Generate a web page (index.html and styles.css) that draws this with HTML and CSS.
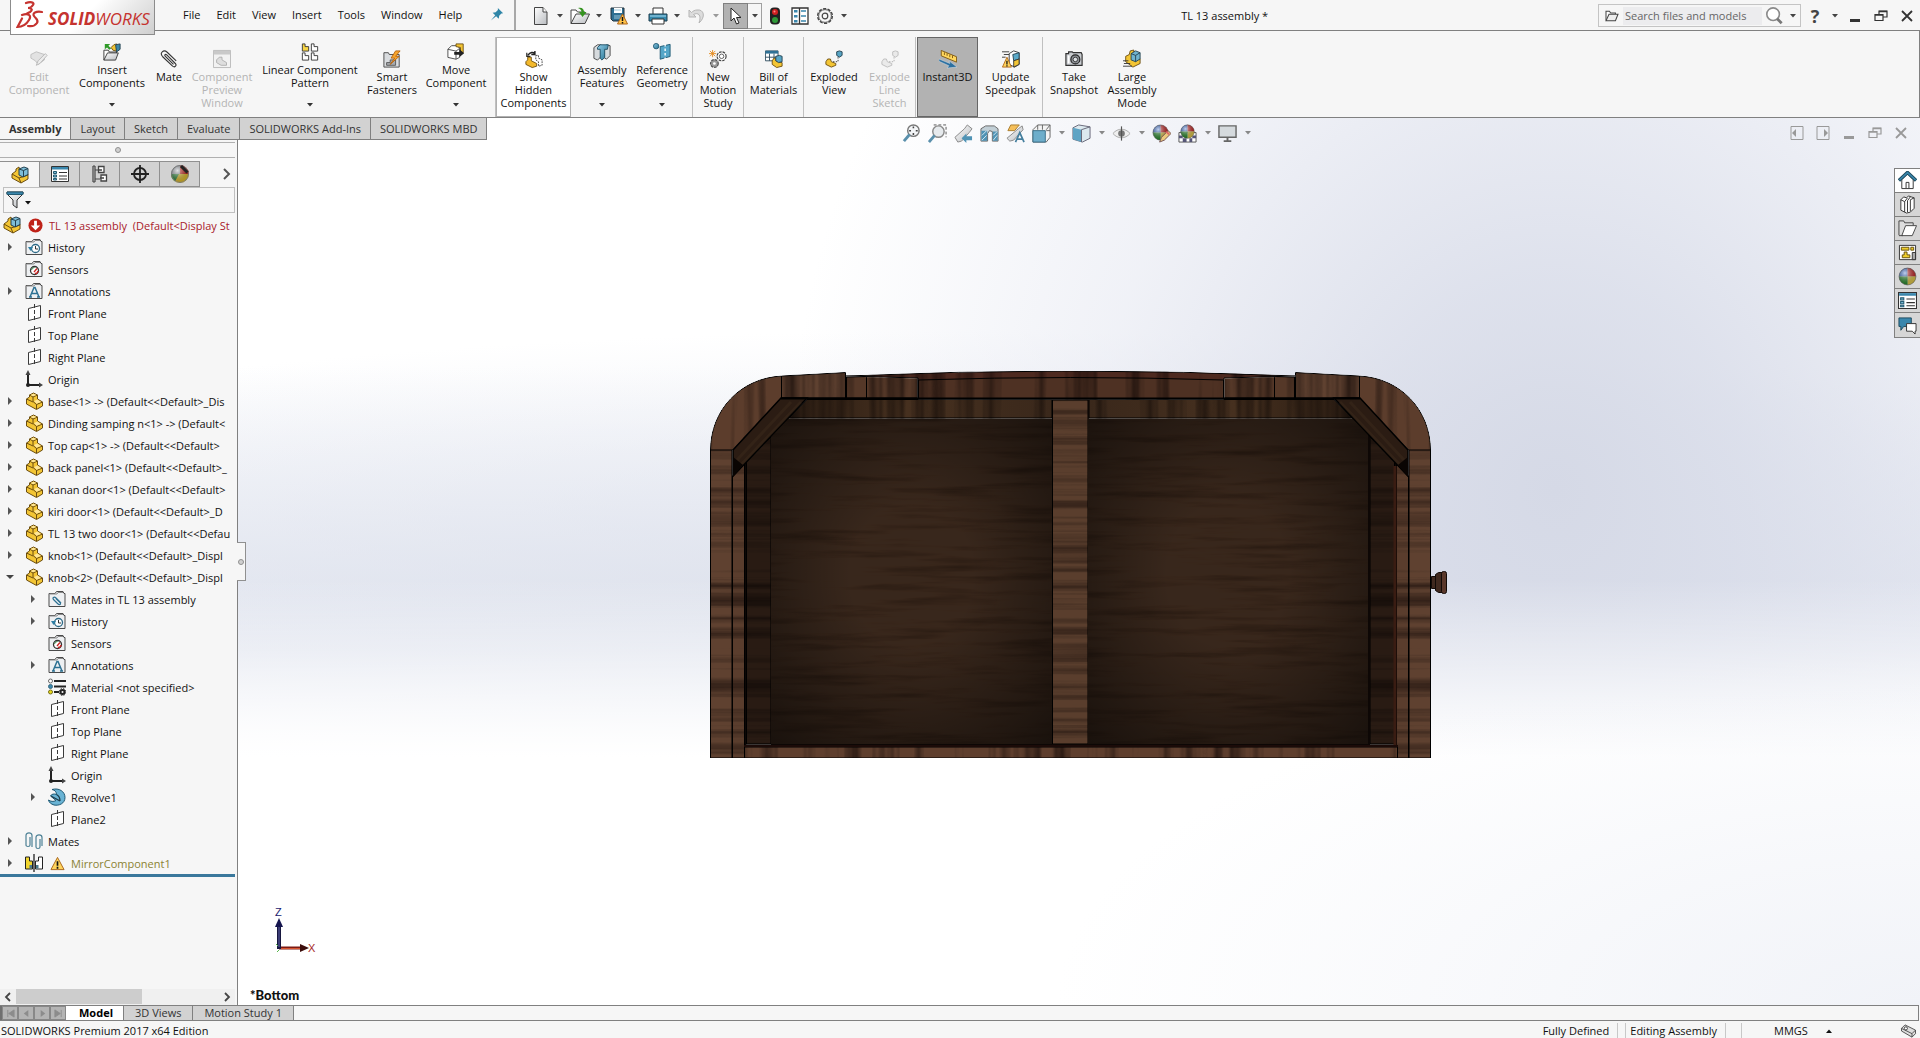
FILE: index.html
```
<!DOCTYPE html>
<html lang="en">
<head>
    <meta charset="UTF-8">
    <meta name="viewport" content="width=device-width, initial-scale=1.0">
    <title>TL 13 assembly *</title>
    <link rel="stylesheet" href="styles.css">
</head>
<body>
    <!-- Icon sprite -->
    <svg class="sprite" aria-hidden="true">
        <defs>
            <linearGradient id="steel" x1="0" y1="0" x2="1" y2="1"><stop offset="0" stop-color="#fff"/><stop offset="1" stop-color="#b9bcc0"/></linearGradient>
            <linearGradient id="sky" x1="0" y1="0" x2="1" y2="1"><stop offset="0" stop-color="#8fcbe6"/><stop offset="1" stop-color="#22708f"/></linearGradient>
            <radialGradient id="shine" cx=".35" cy=".3" r=".7"><stop offset="0" stop-color="#fff" stop-opacity=".7"/><stop offset="1" stop-color="#000" stop-opacity=".25"/></radialGradient>
        </defs>
        <symbol id="i-part" viewBox="0 0 18 18"><path d="M1.500 7l3-2V3l4-2 4 2v4l5 3v4l-6 3.500L1.500 12z" fill="#f3c534" stroke="#6b4d10"/><path d="M4.500 3l3.500 2 4.500-2M8 5v4.500l3.500 3 6-2.500M11.500 12.500V17M1.500 7L8 10" fill="none" stroke="#6b4d10"/><path d="M5.500 3l3-1.300 3 1.300L8 4.300zM9 9l3.500-1.500L16 10l-4.500 1.700z" fill="#ffe79a"/></symbol>
        <symbol id="i-asm" viewBox="0 0 18 18"><path d="M1 8l4-3v-2l3-2 1 8 8-1v5l-7 4L1 12z" fill="#f3c534" stroke="#6b4d10"/><path d="M1 8l7 4 2 5M8 12l9-3" fill="none" stroke="#6b4d10"/><path d="M8 3l5-2 4 1.500v6L12 11l-4-2z" fill="#7dbdd8" stroke="#23404e"/><path d="M8 3l4.500 1.500L17 2.500M12.500 4.500V11" fill="none" stroke="#23404e"/></symbol>
        <symbol id="i-folder" viewBox="0 0 18 18"><path d="M1 16.500V3.500h6l1.500-2H15l1 2h1v13z" fill="#eef0f2" stroke="#4a4a4a"/><path d="M1.500 4H9l1-1.500h5" fill="none" stroke="#8a8a8a"/></symbol>
        <symbol id="i-history" viewBox="0 0 18 18"><use href="#i-folder"/><circle cx="10.500" cy="10.500" r="4" fill="#fff" stroke="#2d6a87" stroke-width="1.300"/><path d="M10.500 8v3h2.500" fill="none" stroke="#333"/><path d="M3 9h5l-2.500 4z" fill="#2d7da3"/></symbol>
        <symbol id="i-sensor" viewBox="0 0 18 18"><use href="#i-folder"/><circle cx="9.500" cy="10.500" r="4" fill="#fff" stroke="#333" stroke-width="1.300"/><path d="M9 12l3-3.500" stroke="#c22" stroke-width="1.300"/><path d="M10 13.500a3 3 0 0 0 3-2.500" stroke="#c22" stroke-width="1.500" fill="none"/><path d="M6.500 10a3 3 0 0 1 3-2.500" stroke="#3a8a4a" fill="none"/></symbol>
        <symbol id="i-annot" viewBox="0 0 18 18"><use href="#i-folder"/><path d="M5 15l4-9.500h1L14 15M6.500 11.500h6M4 15h3M12 15h3" fill="none" stroke="#2d7193" stroke-width="1.500"/></symbol>
        <symbol id="i-matefold" viewBox="0 0 18 18"><use href="#i-folder"/><path d="M13 13l-5-5c-2-2-4 0-2.500 1.500l4 4c2 2 4 1 2.500-1L8 8.500" fill="none" stroke="#2d7193" stroke-width="1.200"/></symbol>
        <symbol id="i-plane" viewBox="0 0 18 18"><path d="M3.500 4.500l12-3v12l-12 3z" fill="#fff" stroke="#3a3a3a"/><path d="M9.500 0v18" stroke="#3a3a3a" stroke-dasharray="4 2"/></symbol>
        <symbol id="i-origin" viewBox="0 0 18 18"><path d="M3 4v11h11" fill="none" stroke="#222" stroke-width="2"/><path d="M3 0L.5 5h5zM18 15l-4-2.500v5z" fill="#444"/><circle cx="3" cy="15" r="2" fill="#222"/></symbol>
        <symbol id="i-material" viewBox="0 0 18 18"><path d="M6 3h12M6 8.500h12M6 14h5" stroke="#222" stroke-width="2"/><circle cx="2.500" cy="3" r="2" fill="#fff" stroke="#666"/><circle cx="2.500" cy="8.500" r="2" fill="#3a87ad" stroke="#3a6a80"/><circle cx="2.500" cy="14" r="2" fill="#e8d91c" stroke="#77701c"/><circle cx="14.500" cy="14" r="2" fill="none" stroke="#222" stroke-width="2"/><circle cx="14.500" cy="14" r="3.400" fill="none" stroke="#222" stroke-dasharray="1.500 1.200"/></symbol>
        <symbol id="i-revolve" viewBox="0 0 18 18"><path d="M4 1.500c7-2 13 2 13 8S11 18 6 17c-3-1-5-2.500-5.500-5 2 1.500 5 2 7.500.5L2.500 8c1-2 3.500-2.500 6-1.500 0-2.500-1.500-4.500-4.500-5z" fill="#69b3d4" stroke="#1d5873"/><path d="M3 8l9 5M8.500 6.500c2 1 3.500 3 3.500 6.500" fill="none" stroke="#1d3c4a" stroke-width="1.300"/></symbol>
        <symbol id="i-clips" viewBox="0 0 18 18"><path d="M5 5v8c0 2-4 2-4 0V3.500c0-3.500 6-3.500 6 0V15M15 7v8c0 2-4 2-4 0V5.500c0-3.500 6-3.500 6 0V14" fill="none" stroke="#4c8095" stroke-width="1.200"/></symbol>
        <symbol id="i-mirror" viewBox="0 0 18 18"><path d="M.5 3h4v4h3v8h-7z" fill="#f1d52e" stroke="#222"/><path d="M17.500 3h-4v4h-3v8h7z" fill="#fff" stroke="#222"/><path d="M9 0v18" stroke="#111" stroke-width="1.200"/><path d="M4.500 11h2.500v3.500H4.500zM11 11h2.500v3.500H11z" fill="#49788c"/></symbol>
        <symbol id="i-warn" viewBox="0 0 16 16"><path d="M8 1.500l7 13H1z" fill="#ffd45c" stroke="#a8641a" stroke-linejoin="round"/><path d="M8 5.500v5M8 11.500v2" stroke="#111" stroke-width="1.800"/></symbol>
        <symbol id="i-error" viewBox="0 0 16 16"><circle cx="8" cy="8" r="7.500" fill="#bf2218"/><path d="M6.500 3h3v5H13l-5 5-5-5h3.500z" fill="#fff"/></symbol>
        <symbol id="i-props" viewBox="0 0 18 18"><path d="M.5 1.500h17v15H.5z" fill="#fff" stroke="#333"/><path d="M1 2h16v2.500H1z" fill="#3a87ad"/><path d="M2.500 6.500h3v2h-3zM2.500 10h3v2h-3zM2.500 13.500h3v1.500h-3z" fill="#7bbbd6" stroke="#235b73"/><path d="M8 7.500h8M8 11h8M8 14h8" stroke="#333"/></symbol>
        <symbol id="i-config" viewBox="0 0 18 18"><path d="M2 1h2M2 17h2M4 1v16M4 5h5M4 14h5M2 1v16" fill="none" stroke="#444" stroke-width="1.200"/><path d="M7.500 7.500v-6H13v6zM10 16v-6h5.500v6z" fill="#fff" stroke="#444" stroke-width="1.300"/><path d="M7 5h4M9 13h4" stroke="#444" stroke-width="1.300"/></symbol>
        <symbol id="i-target" viewBox="0 0 18 18"><circle cx="9" cy="9" r="6" fill="none" stroke="#222" stroke-width="1.800"/><path d="M9 0v18M0 9h18" stroke="#222" stroke-width="1.800"/></symbol>
        <symbol id="i-ball" viewBox="0 0 18 18"><path d="M9 9V1a8 8 0 0 0-8 8z" fill="#2a61c8"/><path d="M9 9V1a8 8 0 0 1 8 8z" fill="#cf2323"/><path d="M9 9h8a8 8 0 0 1-8 8z" fill="#ecd24a"/><path d="M9 9v8a8 8 0 0 1-8-8z" fill="#28922c"/><circle cx="9" cy="9" r="8" fill="url(#shine)" stroke="#555" stroke-width=".6"/></symbol>
        <symbol id="i-dispball" viewBox="0 0 18 18"><path d="M9 9V0a9 9 0 0 0-9 9z" fill="#9aa0a8"/><path d="M9 9V0a9 9 0 0 1 9 9z" fill="#d1231c"/><path d="M0 9h18a9 9 0 0 1-9 9 9 9 0 0 1-9-9z" fill="#ecc62c"/><path d="M0 9h8l-4 7.500A9 9 0 0 1 0 9z" fill="#2c8c3c"/><circle cx="9" cy="9" r="8.500" fill="url(#shine)" stroke="#777"/><path d="M10 1l6.500 6.500" stroke="#222" stroke-width="3"/></symbol>
        <symbol id="i-filter" viewBox="0 0 18 18"><path d="M1 1h16v2l-6 6v8l-4-3V9L1 3z" fill="url(#steel)" stroke="#333"/><path d="M1 1h16v2.500H1z" fill="#3a87ad" stroke="#245b73"/></symbol>

        <symbol id="i-pin" viewBox="0 0 16 16"><path d="M9 1l6 6-2 .5-2.500 2.500-.5 3.500-3-3-6 5 5-6-3-3L6.500 6 9 3.500z" fill="#2f86a8"/></symbol>
        <symbol id="i-new" viewBox="0 0 18 18"><path d="M2.500.5h8.500l4 4.500v12.500H2.500z" fill="url(#steel)" stroke="#444"/><path d="M11 .5V5h4" fill="#fff" stroke="#444"/></symbol>
        <symbol id="i-open" viewBox="0 0 20 18"><path d="M1 16.500V3h5l1.500 2H15v3" fill="#fff" stroke="#444"/><path d="M1 16.500L6 7h13.500L15 16.500z" fill="url(#steel)" stroke="#444"/><path d="M8 1c4-1 6 1 6 4h2.500L12.500 10 9 5h2.500c0-2-1-3-3.500-4z" fill="#35941f"/></symbol>
        <symbol id="i-save" viewBox="0 0 18 18"><path d="M1 1h13v13H3l-2-2z" fill="#2f6f92" stroke="#20313b"/><path d="M4 1h8v5H4z" fill="#fff"/><path d="M4 3h7M4 9h7M4 11h7" stroke="#9ac6da"/><path d="M12.500 7l5 10h-10z" fill="#ffc247" stroke="#b0671a"/><path d="M12.500 10v4M12.500 15v1.500" stroke="#111" stroke-width="1.500"/></symbol>
        <symbol id="i-print" viewBox="0 0 20 18"><path d="M5 7V1h10v6" fill="#fff" stroke="#333"/><path d="M1 7h18v7H1z" fill="#3689ad" stroke="#1d3d4c"/><path d="M2 9h16" stroke="#a8dbf0"/><path d="M4 12h12v5H4z" fill="#fff" stroke="#333"/></symbol>
        <symbol id="i-undo" viewBox="0 0 18 18"><path d="M1 3v7h7L5.500 7.500C10 5 14 8 11 16c7-6 5-14-2-13-2 0-4 1-5.500 2.500z" fill="#dcdcdc" stroke="#b5b5b5"/></symbol>
        <symbol id="i-cursor" viewBox="0 0 18 18"><path d="M4 1v13l3-3 2.500 6 2.500-1-2.500-5.500H14z" fill="#fff" stroke="#222"/></symbol>
        <symbol id="i-traffic" viewBox="0 0 12 18"><rect x="1" y=".5" width="10" height="17" rx="4" fill="#222"/><circle cx="6" cy="5" r="3" fill="#cf2020"/><circle cx="6" cy="13" r="3" fill="#2f9a38"/><circle cx="5.500" cy="4.500" r="1" fill="#ff8b8b"/></symbol>
        <symbol id="i-list" viewBox="0 0 18 18"><path d="M1 1h16v16H1zM8.500 1v16" fill="#fff" stroke="#333" stroke-width="1.300"/><path d="M3 3h3.500v2.500H3zM3 8h3.500v2.500H3zM3 13h3.500v2.500H3z" fill="#3a87ad"/><path d="M10 4h5M10 9h5M10 14h5" stroke="#3a87ad" stroke-width="1.500"/></symbol>
        <symbol id="i-gear" viewBox="0 0 18 18"><circle cx="9" cy="9" r="7.300" fill="#f6f6f6" stroke="#444" stroke-width="1.500" stroke-dasharray="3.200 1.400"/><circle cx="9" cy="9" r="6.400" fill="#f6f6f6" stroke="#555"/><circle cx="9" cy="9" r="2.800" fill="none" stroke="#444" stroke-width="1.200"/></symbol>
        <symbol id="i-caret" viewBox="0 0 6 4"><path d="M0 0h6L3 3.500z" fill="currentColor"/></symbol>
        <symbol id="i-search" viewBox="0 0 20 20"><circle cx="9" cy="8" r="7" fill="#fff" stroke="#8a8a8a" stroke-width="1.800"/><path d="M13.500 13l5 5" stroke="#777" stroke-width="3"/></symbol>
        <symbol id="i-sfolder" viewBox="0 0 16 14"><path d="M1 12V1.500h4l1.500 2H12V5" fill="#fff" stroke="#444" stroke-width="1.200"/><path d="M1 12.500L4.500 5H15l-3 7.500z" fill="#eee" stroke="#444" stroke-width="1.200"/></symbol>
        <symbol id="i-min" viewBox="0 0 14 14"><path d="M2 11.500h10" stroke="currentColor" stroke-width="3"/></symbol>
        <symbol id="i-restore" viewBox="0 0 14 14"><path d="M1 5.500h8v6H1zM5 5V2h8v6h-4" fill="none" stroke="currentColor" stroke-width="1.200"/><path d="M1 6h8M5 2.500h8" stroke="currentColor" stroke-width="1.500"/></symbol>
        <symbol id="i-close" viewBox="0 0 14 14"><path d="M2 2l10 10M12 2L2 12" stroke="currentColor" stroke-width="1.800"/></symbol>
        <symbol id="i-pleft" viewBox="0 0 14 14"><path d="M1 .5h12v13H1z" fill="none" stroke="currentColor"/><path d="M6 3v8L2 7z" fill="currentColor"/></symbol>
        <symbol id="i-pright" viewBox="0 0 14 14"><path d="M1 .5h12v13H1z" fill="none" stroke="currentColor"/><path d="M8 3v8l4-4z" fill="currentColor"/></symbol>

        <symbol id="i-edit" viewBox="0 0 20 20"><path d="M1 5l6-3 9 3v6l-7 5-3-4-5-3z" fill="#e2e2e2" stroke="#bdbdbd"/><path d="M7 17l2-5 8-8 2 2-8 9z" fill="#ececec" stroke="#b5b5b5"/></symbol>
        <symbol id="i-insert" viewBox="0 0 20 20"><path d="M1 19V8h5l1 2h8v2" fill="#fff" stroke="#333"/><path d="M1 19l4-8h12l-3 8z" fill="url(#steel)" stroke="#333"/><path d="M2 1h6L6 3l3 3-2 1.500L4.500 5 2 7z" fill="#2f9a28"/><path d="M9 5l3-3 3-1v8l-4-1z" fill="#f3c534" stroke="#6b4d10"/><path d="M14 2l5-1v6l-4 3z" fill="#3d87a8" stroke="#23404e"/></symbol>
        <symbol id="i-mate" viewBox="0 0 20 20"><path d="M15 16L6 7C4.500 5.500 6 4 7.500 5.500L17 15c2 2-.5 5-3 3L3 7.500C-1 3 4-1 8 2.500L18 12" fill="none" stroke="#333" stroke-width="1.200"/></symbol>
        <symbol id="i-preview" viewBox="0 0 20 20"><path d="M.5.5h19v19H.5z" fill="#f2f2f2" stroke="#b5b5b5"/><path d="M1 1h18v4H1z" fill="#c9c9c9"/><path d="M4 11l3-3h3v3l5 3v3H9l-5-3z" fill="#dedede" stroke="#adadad"/></symbol>
        <symbol id="i-pattern" viewBox="0 0 20 20"><path d="M1.500 1h3v3h4v5h-7z" fill="#f6d445" stroke="#333"/><path d="M11.500 1h3v3h4v5h-7zM1.500 11h3v3h4v5h-7zM11.500 11h3v3h4v5h-7z" fill="#fff" stroke="#333"/></symbol>
        <symbol id="i-smart" viewBox="0 0 20 20"><path d="M1 19V3h5l1 2h11v14z" fill="#d9dcdf" stroke="#444"/><path d="M4 14h4v-3h6v6H4z" fill="#a8abb0" stroke="#555"/><path d="M19 1h-5L9 9h4l-5 7 10-9h-4z" fill="#f9a52b" stroke="#b3610c"/></symbol>
        <symbol id="i-move" viewBox="0 0 20 20"><path d="M1 7l4-4h7l2 3v10l-4 2-9-2z" fill="#fff" stroke="#444"/><path d="M1 7l9 2 4-3M10 9v9" fill="none" stroke="#444"/><path d="M10 1h8v10h-3V5l-5-1z" fill="#f3c534" stroke="#6b4d10"/><path d="M8 10h6V7l5 4.500-5 4V13H8z" fill="#222"/></symbol>
        <symbol id="i-hidden" viewBox="0 0 20 20"><path d="M3 6c3-4 6-4 8-2M11 1v4H7" fill="none" stroke="#222" stroke-width="1.600"/><path d="M2 3v4h4" fill="none" stroke="#222" stroke-width="1.300"/><path d="M1 13l2-2V8h4v4l6 3v3l-5 1.500L1 16z" fill="#f3b92c" stroke="#6b4d10"/><path d="M12 6h3v3l4 2v6l-4 1v-5l-3-2z" fill="#fff" stroke="#444" stroke-dasharray="2 1"/></symbol>
        <symbol id="i-feat" viewBox="0 0 20 20"><path d="M1 5l4-3h4v13l-4 4-4-2zM12 5l3-3 4 1v11l-4 4-3-2z" fill="#d6dadd" stroke="#444"/><path d="M5 5l3-3h9l-1 5h-3v9l-3 3-2-2V7H5z" fill="url(#sky)" stroke="#1d4d63"/></symbol>
        <symbol id="i-refgeo" viewBox="0 0 20 20"><circle cx="3.500" cy="3.500" r="3" fill="url(#sky)" stroke="#1d5873"/><path d="M8 4l11-2.500V15L8 18z" fill="#55a6c8" stroke="#1d5873"/><path d="M13.500 1v18" stroke="#fff" stroke-dasharray="3 2" stroke-width="1.500"/></symbol>
        <symbol id="i-motion" viewBox="0 0 20 20"><circle cx="14" cy="7" r="5" fill="#fff" stroke="#444" stroke-width="1.300" stroke-dasharray="3 1"/><circle cx="14" cy="7" r="2.500" fill="#fff" stroke="#555"/><circle cx="6" cy="15" r="4.300" fill="#9a9a9a" stroke="#555" stroke-width="1.300" stroke-dasharray="3 1"/><circle cx="6" cy="15" r="1.500" fill="#fff"/><path d="M4 0v8M0 4h8M1 1l6 6M7 1L1 7" stroke="#e48a1e"/></symbol>
        <symbol id="i-bom" viewBox="0 0 20 20"><path d="M.5 1h14v11H.5z" fill="#fff" stroke="#2b4a5c"/><path d="M.5 1h14v3H.5z" fill="#2f7196"/><path d="M.5 8h14M5 4v8M10 4v8" stroke="#2b4a5c"/><path d="M8 12l2-3h2v3l7 2v4l-6 1.500L8 16z" fill="#f3c534" stroke="#6b4d10"/><path d="M12 7l4-1 3 1v6l-4 1-3-2z" fill="#57a4c4" stroke="#23404e"/></symbol>
        <symbol id="i-explode" viewBox="0 0 20 20"><path d="M1 13l2-3h3l1 3 5 2v2l-5 2-6-3z" fill="#f3c534" stroke="#6b4d10"/><path d="M13 2l3-1 3 1v4l-3 2-3-2z" fill="#57a4c4" stroke="#23404e"/><path d="M9 13h5.500V7" fill="none" stroke="#333" stroke-dasharray="1.500 1.500"/></symbol>
        <symbol id="i-explodeline" viewBox="0 0 20 20"><path d="M1 13l2-3h3l1 3 5 2v2l-5 2-6-3z" fill="#eaeaea" stroke="#bcbcbc"/><path d="M13 2l3-1 3 1v4l-3 2-3-2z" fill="#eaeaea" stroke="#bcbcbc"/><path d="M9 13h5.500V7" fill="none" stroke="#aaa" stroke-dasharray="1.500 1.500"/></symbol>
        <symbol id="i-instant" viewBox="0 0 20 20"><path d="M2.500.5l17 7v6l-17-7z" fill="#ffd75e" stroke="#7a5510"/><path d="M6 2.500v3M9 3.500v3M12 5v3M15 6v3" stroke="#7a5510"/><path d="M0 10l12 5-1-3 9 7-11 1 2-2.500-11-5z" fill="#2c6fa0" stroke="#dbe8f0" stroke-width=".5"/></symbol>
        <symbol id="i-speedpak" viewBox="0 0 20 20"><path d="M0 2h8M2 5h6M0 8h4" stroke="#333"/><path d="M8 4l5-3 6 2v13l-5 3-6-3z" fill="#fff" stroke="#333"/><path d="M12 5l7-2v7l-6 2z" fill="#5ba9c8" stroke="#23404e"/><path d="M13 12l6-2v6l-6 3z" fill="#f3c534" stroke="#333"/><path d="M5.500 8l5 11H.5z" fill="#ffd45c" stroke="#b0671a"/><path d="M5.500 12v4M5.500 17v1.200" stroke="#111" stroke-width="1.400"/></symbol>
        <symbol id="i-camera" viewBox="0 0 20 20"><path d="M1 4h3V2h4l1 1h9l1 2v12H1z" fill="#c9ccd0" stroke="#333" stroke-width="1.300"/><circle cx="11.500" cy="10.500" r="5" fill="#8b8f94" stroke="#222" stroke-width="1.300"/><circle cx="11.500" cy="10.500" r="2.500" fill="#dfe3e6" stroke="#333"/><path d="M4 6v9" stroke="#fff" stroke-width="2"/></symbol>
        <symbol id="i-large" viewBox="0 0 20 20"><path d="M3 7l4-2 1-4 4-1v9l7 1v5l-8 4-8-6z" fill="#f3c534" stroke="#6b4d10"/><path d="M9 4l5-3 5 2v7l-5 3-5-2z" fill="#6fb3cf" stroke="#23404e"/><path d="M9 4l5 2 5-3M14 6v7" fill="none" stroke="#23404e"/><path d="M0 12h6M1 15h7M0 18h10" stroke="#333"/></symbol>

        <symbol id="i-zoomfit" viewBox="0 0 20 20"><circle cx="12" cy="7" r="6" fill="#f3f5f7" stroke="#777" stroke-width="1.500"/><path d="M12 2.500v9M7.500 7h9" stroke="#444" stroke-width="1.600" stroke-dasharray="2 5"/><path d="M8 11l-6 7" stroke="#5a90ac" stroke-width="3"/></symbol>
        <symbol id="i-zoomarea" viewBox="0 0 20 20"><path d="M6 1h13v13" fill="none" stroke="#555" stroke-dasharray="3 2"/><circle cx="11" cy="8" r="6" fill="#e6eaed" stroke="#888" stroke-width="1.500"/><path d="M7 12l-6 7" stroke="#5a90ac" stroke-width="3"/></symbol>
        <symbol id="i-prevview" viewBox="0 0 20 20"><path d="M1 14l10-9 3-4 5 4-3 4-8 9-4 1z" fill="url(#steel)" stroke="#888"/><path d="M19 13h-6v-3l-5 5 5 5v-3h6z" fill="#4f93b5"/></symbol>
        <symbol id="i-section" viewBox="0 0 20 20"><path d="M1 5l5-3h9l4 3v13h-6V8l-3-1-2 3v8H1z" fill="#c2cfd6" stroke="#666"/><path d="M1.500 7H7.500v10.500h-6zM13.500 8h5v9.500h-5z" fill="#4f93b5"/><path d="M2 12l5-5M2 17l5-5M14 12l4-4M14 17l4-5" stroke="#d5e9f2"/></symbol>
        <symbol id="i-dynview" viewBox="0 0 20 20"><path d="M5 1h9L9 7H2z" fill="#f5bf5a" stroke="#a97c2c"/><path d="M1 15L13 5l4-3 1 4-10 11-4 1z" fill="url(#steel)" stroke="#888"/><path d="M10 19l4.500-10L19 19M12 16h5.500" fill="none" stroke="#457f9e" stroke-width="1.800"/></symbol>
        <symbol id="i-orient" viewBox="0 0 20 20"><path d="M1 6l5-5h13v13l-4 5H1z" fill="#f4f4f4" stroke="#666"/><path d="M6 1v5M19 7h-4M19 1l-4 5M11 1v5" stroke="#666" fill="none"/><path d="M1 7h13v12H1z" fill="#6eaecb" stroke="#3a6f88"/></symbol>
        <symbol id="i-display" viewBox="0 0 20 20"><path d="M1 4l6-3 12 2v12l-8 4-10-3z" fill="#dce9ef" stroke="#667"/><path d="M1 4l9 2v13l-9-3z" fill="#5fa4c4"/><path d="M10 6l9-3M10 6v13" stroke="#667"/></symbol>
        <symbol id="i-eye" viewBox="0 0 20 20"><path d="M1 10c5-6 13-6 18 0-5 6-13 6-18 0z" fill="#efefef" stroke="#aaa"/><circle cx="10" cy="10" r="3.500" fill="#777"/><path d="M10 2.500v15" stroke="#555" stroke-width="1.200"/></symbol>
        <symbol id="i-appear" viewBox="0 0 20 20"><use href="#i-ball" width="18" height="18"/><path d="M8 19l2-5 7-7 3 3-7 7z" fill="#ecc97c" stroke="#755"/><path d="M15 8l3 3" stroke="#d66" stroke-width="2"/></symbol>
        <symbol id="i-scene" viewBox="0 0 20 20"><path d="M1 9h18v10H1z" fill="#fff" stroke="#555"/><path d="M1 12h4v3H1zM15 12h4v3h-4zM5 15h4v4H5zM12 15h3v4h-3z" fill="#557"/><use href="#i-ball" x="2" width="16" height="16"/></symbol>
        <symbol id="i-monitor" viewBox="0 0 20 20"><path d="M1 2h18v12H1z" fill="#d5dade" stroke="#666" stroke-width="1.500"/><path d="M10 14v4M6 18h8" stroke="#666" stroke-width="2"/></symbol>

        <symbol id="i-home" viewBox="0 0 20 20"><path d="M4 9v9.500h12V9l-6-6z" fill="#fff" stroke="#333"/><path d="M8.500 18v-6h3v6" fill="none" stroke="#333"/><path d="M1 10l9-8.500 9 8.500" fill="none" stroke="#1c4a5e" stroke-width="3.500"/><path d="M1.500 9.500L10 1.800l8.500 7.700" fill="none" stroke="#3a87ad" stroke-width="1.700"/></symbol>
        <symbol id="i-books" viewBox="0 0 20 20"><path d="M3 5l3-3 3 1 2-2 3 1 3 1v11l-4 4-4 1-6-3z" fill="#fff" stroke="#333"/><path d="M3 5l4 2v11M7 7l3-4M10 6v12M10 6l3-4M13 5v12M13 5l4-2" fill="none" stroke="#333"/></symbol>
        <symbol id="i-bigfolder" viewBox="0 0 20 20"><path d="M1 17V2h5l1 2h9v3" fill="#ddd" stroke="#444"/><path d="M4 17.500L8 7h11.500L15 17.500z" fill="#fff" stroke="#444"/><path d="M1 17.500h4" stroke="#444"/></symbol>
        <symbol id="i-palette" viewBox="0 0 20 20"><path d="M1.500 2.500h17v15h-17z" fill="#fff" stroke="#333"/><path d="M3.500 4.500h8v3h-8zM13.500 4.500h3v3h-3zM6.500 9.500h3v3h3v3h-8v-3h2z" fill="#f0cf2e" stroke="#66500d"/><path d="M15 10h3.500v7.500H15z" fill="#aaa" stroke="#333"/></symbol>
        <symbol id="i-forum" viewBox="0 0 20 20"><path d="M1 2h13v9H6l-3 4v-4H1z" fill="#3a87ad" stroke="#1c4a5e"/><path d="M9 8h10v8h-1v3l-3-3H9z" fill="#fff" stroke="#333"/></symbol>
        <symbol id="i-tag" viewBox="0 0 18 16"><path d="M1 5l4-4 12 6v4l-4 4L1 8z" fill="#ddd" stroke="#444"/><path d="M1 5l12 6 4-4M13 11v4" fill="none" stroke="#444"/><circle cx="6" cy="5" r="1.800" fill="#fff" stroke="#333"/></symbol>
    </svg>

    <div class="app">
        <header class="titlebar">
            <a class="logo" href="#" aria-label="SOLIDWORKS">
                <svg class="logo-mark" viewBox="0 0 28 28" aria-hidden="true"><g fill="none" stroke="#c5332f" stroke-width="2.200" stroke-linecap="round"><path d="M10 2c4-1.500 9-1 7 2s-5 3-5 3c4 0 5 2 2 4l-3 1.500"/><path d="M6 14c6-2 10 0 7 5S5 26 1.500 26L6 17.500"/><path d="M26 11c-6-1-10 1-8 4s5 4 3 7-6 3.500-9 3"/></g></svg>
                <span><b>SOLID</b>WORKS</span>
            </a>
            <nav class="menu">
                <a href="#">File</a>
                <a href="#">Edit</a>
                <a href="#">View</a>
                <a href="#">Insert</a>
                <a href="#">Tools</a>
                <a href="#">Window</a>
                <a href="#">Help</a>
            </nav>
            <button class="pin" aria-label="Pin menu"><svg><use href="#i-pin"/></svg></button>
            <div class="quick">
                <button aria-label="New"><svg><use href="#i-new"/></svg></button>
                <button class="drop" aria-label="New options"><svg><use href="#i-caret"/></svg></button>
                <button aria-label="Open"><svg><use href="#i-open"/></svg></button>
                <button class="drop" aria-label="Open options"><svg><use href="#i-caret"/></svg></button>
                <button aria-label="Save"><svg><use href="#i-save"/></svg></button>
                <button class="drop" aria-label="Save options"><svg><use href="#i-caret"/></svg></button>
                <button aria-label="Print"><svg><use href="#i-print"/></svg></button>
                <button class="drop" aria-label="Print options"><svg><use href="#i-caret"/></svg></button>
                <button aria-label="Undo" disabled><svg><use href="#i-undo"/></svg></button>
                <button class="drop" aria-label="Undo options" disabled><svg><use href="#i-caret"/></svg></button>
                <button class="pressed" aria-label="Select"><svg><use href="#i-cursor"/></svg></button>
                <button class="drop framed" aria-label="Select options"><svg><use href="#i-caret"/></svg></button>
                <button aria-label="Rebuild"><svg><use href="#i-traffic"/></svg></button>
                <button aria-label="File properties"><svg><use href="#i-list"/></svg></button>
                <button aria-label="Options"><svg><use href="#i-gear"/></svg></button>
                <button class="drop" aria-label="More options"><svg><use href="#i-caret"/></svg></button>
            </div>
            <div class="doc-title">TL 13 assembly *</div>
            <form class="search">
                <svg class="search-folder"><use href="#i-sfolder"/></svg>
                <input type="text" aria-label="Search files and models" placeholder="Search files and models">
                <button type="button" aria-label="Search"><svg><use href="#i-search"/></svg></button>
                <button type="button" class="drop" aria-label="Search options"><svg><use href="#i-caret"/></svg></button>
            </form>
            <div class="window-buttons">
                <button class="help" aria-label="Help">?</button>
                <button class="drop" aria-label="Help options"><svg><use href="#i-caret"/></svg></button>
                <button aria-label="Minimize"><svg><use href="#i-min"/></svg></button>
                <button aria-label="Restore"><svg><use href="#i-restore"/></svg></button>
                <button aria-label="Close"><svg><use href="#i-close"/></svg></button>
            </div>
        </header>

        <div class="ribbon">
            <button disabled><svg><use href="#i-edit"/></svg>Edit<br>Component</button>
            <button class="has-menu"><svg><use href="#i-insert"/></svg>Insert<br>Components<svg class="caret"><use href="#i-caret"/></svg></button>
            <button><svg><use href="#i-mate"/></svg>Mate</button>
            <button disabled><svg><use href="#i-preview"/></svg>Component<br>Preview<br>Window</button>
            <button class="has-menu"><svg><use href="#i-pattern"/></svg>Linear Component<br>Pattern<svg class="caret"><use href="#i-caret"/></svg></button>
            <button><svg><use href="#i-smart"/></svg>Smart<br>Fasteners</button>
            <button class="has-menu last"><svg><use href="#i-move"/></svg>Move<br>Component<svg class="caret"><use href="#i-caret"/></svg></button>
            <button class="hot last"><svg><use href="#i-hidden"/></svg>Show<br>Hidden<br>Components</button>
            <button class="has-menu"><svg><use href="#i-feat"/></svg>Assembly<br>Features<svg class="caret"><use href="#i-caret"/></svg></button>
            <button class="has-menu last"><svg><use href="#i-refgeo"/></svg>Reference<br>Geometry<svg class="caret"><use href="#i-caret"/></svg></button>
            <button class="last"><svg><use href="#i-motion"/></svg>New<br>Motion<br>Study</button>
            <button class="last"><svg><use href="#i-bom"/></svg>Bill of<br>Materials</button>
            <button><svg><use href="#i-explode"/></svg>Exploded<br>View</button>
            <button class="last" disabled><svg><use href="#i-explodeline"/></svg>Explode<br>Line<br>Sketch</button>
            <button class="on last"><svg><use href="#i-instant"/></svg>Instant3D</button>
            <button class="last"><svg><use href="#i-speedpak"/></svg>Update<br>Speedpak</button>
            <button><svg><use href="#i-camera"/></svg>Take<br>Snapshot</button>
            <button><svg><use href="#i-large"/></svg>Large<br>Assembly<br>Mode</button>
        </div>

        <div class="work">
            <div class="command-tabs">
                <button class="active">Assembly</button>
                <button>Layout</button>
                <button>Sketch</button>
                <button>Evaluate</button>
                <button>SOLIDWORKS Add-Ins</button>
                <button>SOLIDWORKS MBD</button>
            </div>

            <div class="panes">
                <aside class="sidebar">
                    <div class="grip"></div>
                    <div class="panel-tabs">
                        <button class="active" aria-label="FeatureManager"><svg><use href="#i-asm"/></svg></button>
                        <button aria-label="PropertyManager"><svg><use href="#i-props"/></svg></button>
                        <button aria-label="ConfigurationManager"><svg><use href="#i-config"/></svg></button>
                        <button aria-label="DimXpertManager"><svg><use href="#i-target"/></svg></button>
                        <button aria-label="DisplayManager"><svg><use href="#i-dispball"/></svg></button>
                        <button class="more" aria-label="More tabs"><svg viewBox="0 0 8 12"><path d="M1 1l5 5-5 5" fill="none" stroke="#555" stroke-width="2"/></svg></button>
                    </div>
                    <button class="filter" aria-label="Filter"><svg><use href="#i-filter"/></svg><svg class="caret"><use href="#i-caret"/></svg></button>
                    <ul class="tree">
                        <li class="root"><svg><use href="#i-asm"/></svg><svg class="badge"><use href="#i-error"/></svg>TL 13 assembly &nbsp;(Default&lt;Display St</li>
                        <li class="closed"><svg><use href="#i-history"/></svg>History</li>
                        <li><svg><use href="#i-sensor"/></svg>Sensors</li>
                        <li class="closed"><svg><use href="#i-annot"/></svg>Annotations</li>
                        <li><svg><use href="#i-plane"/></svg>Front Plane</li>
                        <li><svg><use href="#i-plane"/></svg>Top Plane</li>
                        <li><svg><use href="#i-plane"/></svg>Right Plane</li>
                        <li><svg><use href="#i-origin"/></svg>Origin</li>
                        <li class="closed"><svg><use href="#i-part"/></svg>base&lt;1&gt; -&gt; (Default&lt;&lt;Default&gt;_Dis</li>
                        <li class="closed"><svg><use href="#i-part"/></svg>Dinding samping n&lt;1&gt; -&gt; (Default&lt;</li>
                        <li class="closed"><svg><use href="#i-part"/></svg>Top cap&lt;1&gt; -&gt; (Default&lt;&lt;Default&gt;</li>
                        <li class="closed"><svg><use href="#i-part"/></svg>back panel&lt;1&gt; (Default&lt;&lt;Default&gt;_</li>
                        <li class="closed"><svg><use href="#i-part"/></svg>kanan door&lt;1&gt; (Default&lt;&lt;Default&gt;</li>
                        <li class="closed"><svg><use href="#i-part"/></svg>kiri door&lt;1&gt; (Default&lt;&lt;Default&gt;_D</li>
                        <li class="closed"><svg><use href="#i-part"/></svg>TL 13 two door&lt;1&gt; (Default&lt;&lt;Defau</li>
                        <li class="closed"><svg><use href="#i-part"/></svg>knob&lt;1&gt; (Default&lt;&lt;Default&gt;_Displ</li>
                        <li class="open"><svg><use href="#i-part"/></svg>knob&lt;2&gt; (Default&lt;&lt;Default&gt;_Displ</li>
                        <li class="sub closed"><svg><use href="#i-matefold"/></svg>Mates in TL 13 assembly</li>
                        <li class="sub closed"><svg><use href="#i-history"/></svg>History</li>
                        <li class="sub"><svg><use href="#i-sensor"/></svg>Sensors</li>
                        <li class="sub closed"><svg><use href="#i-annot"/></svg>Annotations</li>
                        <li class="sub"><svg><use href="#i-material"/></svg>Material &lt;not specified&gt;</li>
                        <li class="sub"><svg><use href="#i-plane"/></svg>Front Plane</li>
                        <li class="sub"><svg><use href="#i-plane"/></svg>Top Plane</li>
                        <li class="sub"><svg><use href="#i-plane"/></svg>Right Plane</li>
                        <li class="sub"><svg><use href="#i-origin"/></svg>Origin</li>
                        <li class="sub closed"><svg><use href="#i-revolve"/></svg>Revolve1</li>
                        <li class="sub"><svg><use href="#i-plane"/></svg>Plane2</li>
                        <li class="closed"><svg><use href="#i-clips"/></svg>Mates</li>
                        <li class="closed warning"><svg><use href="#i-mirror"/></svg><svg class="badge"><use href="#i-warn"/></svg>MirrorComponent1</li>
                    </ul>
                    <div class="hscroll">
                        <button aria-label="Scroll left"><svg viewBox="0 0 8 10"><path d="M6 1L2 5l4 4" fill="none" stroke="#444" stroke-width="1.800"/></svg></button>
                        <div class="track"><div class="thumb"></div></div>
                        <button aria-label="Scroll right"><svg viewBox="0 0 8 10"><path d="M2 1l4 4-4 4" fill="none" stroke="#444" stroke-width="1.800"/></svg></button>
                    </div>
                    <button class="splitter" aria-label="Collapse panel"></button>
                </aside>

                <main class="viewport">
                    <svg class="model" viewBox="709 370 738 406" role="img" aria-label="Cabinet, bottom view">
                        <defs>
                            <!-- wood grain: panels, posts, rails -->
                            <filter id="grain-x" x="0" y="0" width="1" height="1" color-interpolation-filters="sRGB">
                                <feTurbulence type="fractalNoise" baseFrequency="0.009 0.120" numOctaves="4" seed="8" result="n"/>
                                <feColorMatrix in="n" type="matrix" values=".7 0 0 0 .65  .75 0 0 0 .6  .8 0 0 0 .55  0 0 0 0 1" result="g"/>
                                <feBlend in="SourceGraphic" in2="g" mode="multiply" result="m"/>
                                <feComposite in="m" in2="SourceAlpha" operator="in"/>
                            </filter>
                            <filter id="grain-post" x="0" y="0" width="1" height="1" color-interpolation-filters="sRGB">
                                <feTurbulence type="fractalNoise" baseFrequency="0.001 0.110" numOctaves="4" seed="3" result="n"/>
                                <feColorMatrix in="n" type="matrix" values="1.200 0 0 0 .3  1.300 0 0 0 .25  1.300 0 0 0 .25  0 0 0 0 1" result="g"/>
                                <feBlend in="SourceGraphic" in2="g" mode="multiply" result="m"/>
                                <feComposite in="m" in2="SourceAlpha" operator="in"/>
                            </filter>
                            <filter id="grain-y" x="0" y="0" width="1" height="1" color-interpolation-filters="sRGB">
                                <feTurbulence type="fractalNoise" baseFrequency="0.070 0.002" numOctaves="3" seed="5" result="n"/>
                                <feColorMatrix in="n" type="matrix" values="1.500 0 0 0 .2  1.600 0 0 0 .15  1.600 0 0 0 .15  0 0 0 0 1" result="g"/>
                                <feBlend in="SourceGraphic" in2="g" mode="multiply" result="m"/>
                                <feComposite in="m" in2="SourceAlpha" operator="in"/>
                            </filter>
                            <radialGradient id="shade" cx=".5" cy=".48" r=".72"><stop offset=".3" stop-color="#000" stop-opacity="0"/><stop offset="1" stop-color="#000" stop-opacity=".55"/></radialGradient>
                            <linearGradient id="board"><stop offset="0" stop-color="#2a1c12"/><stop offset=".45" stop-color="#46301f"/><stop offset="1" stop-color="#3a281b"/></linearGradient>
                        </defs>
                        <path d="M732 450l49-53h577l49 53v306H732z" fill="#0d0705"/>
                        <g filter="url(#grain-x)"><path d="M770 418h281v326H770zM1087 418h280v326h-280z" fill="#38271c"/></g>
                        <path d="M770 418h281v326H770z" fill="url(#shade)"/>
                        <path d="M1087 418h280v326h-280z" fill="url(#shade)"/>
                        <g id="half">
                            <g filter="url(#grain-post)" stroke="#000">
                                <path d="M709.500 450H731v308h-21.500z" fill="#5f4130"/>
                                <path d="M731.500 476l12-12v294h-12z" fill="#5a3d2d"/>
                                <path d="M745.500 462l24.500-25v307h-24.500z" fill="#291b13"/>
                            </g>
                            <g filter="url(#grain-y)" stroke="#000">
                                <path d="M709.500 450c0-40 30-72 71-74v22l-49 52z" fill="#5c3d2c"/>
                                <path d="M780.500 376l64-3.500V398h-64z" fill="#5f4130"/>
                                <path d="M845.500 377l20-.5V398h-20zM865.500 376.500h51V398h-51z" fill="#553828"/>
                                <path d="M806 399.500h245V418H788z" fill="url(#board)"/>
                            </g>
                            <path d="M780 398h26l-74 78v-26z" fill="#2b1c13" stroke="#000" stroke-width="1.500"/>
                            <path d="M800 402l-62 65M790 402l-54 58" stroke="#43301f" stroke-width="3" opacity=".35"/>
                            <path d="M732 477v-20l10 8z" fill="#0a0503"/>
                        </g>
                        <use href="#half" transform="translate(2139 0) scale(-1 1)"/>
                        <path d="M1392.500 466v280h3V466z" fill="#3a1c12"/>
                        <g filter="url(#grain-y)" stroke="#000">
                            <path d="M845 376q224-10 450 0l-72 2v20H917v-20z" fill="#4e2a20"/>
                            <path d="M917.500 380q152-5 305 0v19h-305z" fill="#4e3123"/>
                            <path d="M743.500 747h653v11h-653z" fill="#5f3f2e"/>
                        </g>
                        <g filter="url(#grain-post)"><path d="M1051.500 400h35.500v344h-35.500z" fill="#5a3e2d" stroke="#000"/></g>
                        <path d="M780 398.500h579" stroke="#000" stroke-width="2"/>
                        <path d="M743 746h654" stroke="#1b0b08" stroke-width="2"/>
                        <g fill="#40291f" stroke="#120a07"><path d="M1430.500 576.500h5v12h-5z"/><path d="M1434.500 574.500l3-2h4v20h-4l-3-2z"/><rect x="1440.500" y="571.500" width="5" height="22" rx="2" fill="#5a382b"/></g>
                    </svg>
                    <div class="triad">
                        <svg viewBox="0 0 46 50" role="img" aria-label="Axes">
                            <text x="4" y="11" fill="#20206e">Z</text>
                            <text x="37" y="47" fill="#a62a2a">X</text>
                            <path d="M8 43h24" stroke="#7c1a14" stroke-width="3"/><path d="M8 43.500h22" stroke="#d8542e"/><path d="M29 39l9 4-9 4z" fill="#3c0d0b"/>
                            <path d="M8 44V18" stroke="#17173f" stroke-width="4"/><path d="M8 42V20" stroke="#6264ae"/><path d="M4 22l4-9 4 9z" fill="#15154f"/>
                            <path d="M5 39l2 2M6 47l2-2" stroke="#58b84e"/>
                        </svg>
                        <span>*Bottom</span>
                    </div>
                </main>
            </div>

            <div class="view-tools">
                <button aria-label="Zoom to fit"><svg><use href="#i-zoomfit"/></svg></button>
                <button aria-label="Zoom to area"><svg><use href="#i-zoomarea"/></svg></button>
                <button aria-label="Previous view"><svg><use href="#i-prevview"/></svg></button>
                <button aria-label="Section view"><svg><use href="#i-section"/></svg></button>
                <button aria-label="Dynamic annotation views"><svg><use href="#i-dynview"/></svg></button>
                <button aria-label="View orientation"><svg><use href="#i-orient"/></svg></button>
                <button class="drop" aria-label="View orientation options"><svg><use href="#i-caret"/></svg></button>
                <button aria-label="Display style"><svg><use href="#i-display"/></svg></button>
                <button class="drop" aria-label="Display style options"><svg><use href="#i-caret"/></svg></button>
                <button aria-label="Hide/show items"><svg><use href="#i-eye"/></svg></button>
                <button class="drop" aria-label="Hide/show options"><svg><use href="#i-caret"/></svg></button>
                <button aria-label="Edit appearance"><svg><use href="#i-appear"/></svg></button>
                <button aria-label="Apply scene"><svg><use href="#i-scene"/></svg></button>
                <button class="drop" aria-label="Scene options"><svg><use href="#i-caret"/></svg></button>
                <button aria-label="View settings"><svg><use href="#i-monitor"/></svg></button>
                <button class="drop" aria-label="View settings options"><svg><use href="#i-caret"/></svg></button>
            </div>
            <div class="doc-buttons">
                <button aria-label="Previous pane"><svg><use href="#i-pleft"/></svg></button>
                <button aria-label="Next pane"><svg><use href="#i-pright"/></svg></button>
                <button aria-label="Minimize document"><svg><use href="#i-min"/></svg></button>
                <button aria-label="Restore document"><svg><use href="#i-restore"/></svg></button>
                <button aria-label="Close document"><svg><use href="#i-close"/></svg></button>
            </div>
            <div class="task-pane">
                <button class="active" aria-label="Resources"><svg><use href="#i-home"/></svg></button>
                <button aria-label="Design library"><svg><use href="#i-books"/></svg></button>
                <button aria-label="File explorer"><svg><use href="#i-bigfolder"/></svg></button>
                <button aria-label="View palette"><svg><use href="#i-palette"/></svg></button>
                <button aria-label="Appearances"><svg><use href="#i-ball"/></svg></button>
                <button aria-label="Custom properties"><svg><use href="#i-props"/></svg></button>
                <button aria-label="Forum"><svg><use href="#i-forum"/></svg></button>
            </div>
        </div>

        <div class="sheet-tabs">
            <div class="sheet-nav">
                <button aria-label="First"><svg viewBox="0 0 10 10"><path d="M2 1v8M9 1v8L3 5z" fill="#8c8c8c" stroke="#8c8c8c"/></svg></button>
                <button aria-label="Previous"><svg viewBox="0 0 10 10"><path d="M7 1v8L2 5z" fill="#8c8c8c"/></svg></button>
                <button aria-label="Next"><svg viewBox="0 0 10 10"><path d="M3 1v8l5-4z" fill="#8c8c8c"/></svg></button>
                <button aria-label="Last"><svg viewBox="0 0 10 10"><path d="M8 1v8M1 1v8l6-4z" fill="#8c8c8c" stroke="#8c8c8c"/></svg></button>
            </div>
            <button class="active">Model</button>
            <button>3D Views</button>
            <button>Motion Study 1</button>
        </div>

        <footer class="status">
            <span class="edition">SOLIDWORKS Premium 2017 x64 Edition</span>
            <span class="cell">Fully Defined</span>
            <span class="cell split">Editing Assembly</span>
            <span class="cell blank"></span>
            <button class="units">MMGS<svg><use href="#i-caret"/></svg></button>
            <button class="tag" aria-label="Tags"><svg><use href="#i-tag"/></svg></button>
        </footer>
    </div>
</body>
</html>
```
FILE: styles.css
```
* {
    box-sizing: border-box;
}
body {
    margin: 0;
    font-family: "Open Sans", "Noto Sans", sans-serif;
    font-size: 11px;
    color: #111;
    background-color: #f6f6f6;
}
button {
    display: flex;
    align-items: center;
    justify-content: center;
    padding: 0;
    border: none;
    background: none;
    font: inherit;
    color: inherit;
}
a {
    color: inherit;
    text-decoration: none;
}
svg {
    flex: none;
}
.sprite {
    position: absolute;
    width: 0;
    height: 0;
}
.app {
    display: flex;
    flex-direction: column;
    height: 100vh;
}

/* title bar */
.titlebar {
    display: flex;
    height: 31px;
    border-bottom: 1px solid #808080;
}
.logo {
    display: flex;
    align-items: flex-end;
    gap: 4px;
    z-index: 1;
    width: 145px;
    height: 35px;
    margin-left: 10px;
    padding: 0 4px 5px 5px;
    border: 1px solid #8c8c8c;
    border-top: none;
    background: linear-gradient(135deg, #fff 50%, #cfcfcf);
    color: #c5332f;
    font-size: 17px;
    font-style: italic;
    line-height: 20px;
}
.logo-mark {
    width: 28px;
    height: 28px;
}
.menu {
    display: flex;
    align-items: center;
    padding: 0 12px 0 20px;
    line-height: 16px;
}
.menu a {
    padding: 0 8px;
}
.pin {
    width: 30px;
    height: 28px;
    margin-right: 2px;
}
.pin svg {
    width: 14px;
    height: 14px;
}
.quick {
    display: flex;
    align-items: center;
    height: 30px;
    padding: 2px 0 0 12px;
    border-left: 2px solid #a8a8a8;
}
.quick button {
    width: 25px;
    height: 26px;
}
.quick svg {
    width: 20px;
    height: 18px;
}
.quick .pressed {
    background-color: #b2b2b2;
    border: 1px solid #808080;
}
.quick .framed {
    border: 1px solid #a0a0a0;
    border-left: none;
}
.titlebar .drop {
    width: 14px;
}
.drop svg,
.titlebar .drop svg {
    width: 6px;
    height: 4px;
    color: #444;
}
.drop:disabled svg {
    color: #999;
}
.doc-title {
    flex: 1;
    text-align: center;
    line-height: 32px;
}
.search {
    display: flex;
    align-items: center;
    width: 203px;
    height: 23px;
    margin: 4px 1px 0 0;
    padding-left: 6px;
    border: 1px solid #c4c4c4;
}
.search-folder {
    width: 14px;
    height: 12px;
}
.search input {
    flex: 1;
    min-width: 0;
    height: 18px;
    margin-left: 4px;
    padding: 0 2px;
    border: none;
    background-color: #ececee;
    font: inherit;
}
.search input::placeholder {
    color: #666;
}
.search button {
    width: 24px;
}
.search button svg {
    width: 18px;
    height: 18px;
}
.window-buttons {
    display: flex;
    align-items: center;
    padding-top: 2px;
}
.window-buttons button {
    width: 26px;
}
.window-buttons svg {
    width: 14px;
    height: 14px;
    color: #333;
}
.window-buttons .help {
    font-size: 18px;
    font-weight: bold;
    color: #444;
}

/* ribbon */
.ribbon {
    display: grid;
    grid-template-columns: 76px 70px 44px 62px 114px 50px 79px 76px 60px 61px 51px 60px 60px 52px 63px 64px 62px 54px;
    height: 87px;
    padding: 6px 0 2px 1px;
    border-bottom: 1px solid #808080;
    border-right: 1px solid #808080;
}
.ribbon button {
    flex-direction: column;
    justify-content: flex-start;
    padding: 12px 0 7px;
    line-height: 13px;
    white-space: nowrap;
}
.ribbon button:disabled {
    color: #b4b4b4;
}
.ribbon svg {
    width: 18px;
    height: 20px;
    margin-bottom: 1px;
}
.ribbon .has-menu {
    padding-top: 5px;
}
.ribbon .caret {
    width: 6px;
    height: 4px;
    margin-top: auto;
    margin-bottom: 3px;
    color: #333;
}
.ribbon .last {
    border-right: 1px solid #c0c0c0;
}
.ribbon .hot {
    margin-right: 1px;
    border: 1px solid #b0b0b0;
    background-color: #fff;
    padding-top: 11px;
}
.ribbon .on {
    margin: 0 1px;
    border: 1px solid #666;
    background-color: #b2b2b2;
    padding-top: 11px;
}

/* workspace */
.work {
    position: relative;
    display: flex;
    flex-direction: column;
    flex: 1;
    min-height: 0;
    background:
        radial-gradient(ellipse 45% 40% at 100% 100%, #f1f3f8, rgba(255, 255, 255, 0)),
        linear-gradient(to bottom, rgba(255, 255, 255, 0) 52%, #fff 72%),
        radial-gradient(ellipse 40% 95% at 81% 42%, #d5d9e6 0, rgba(216, 220, 233, .85) 25%, rgba(225, 228, 239, .5) 60%, rgba(255, 255, 255, 0)),
        radial-gradient(ellipse 80% 34% at 50% 58%, #dee2ec 0, rgba(222, 226, 237, .6) 40%, rgba(255, 255, 255, 0)),
        linear-gradient(to bottom, #fff 28%, #e2e6f0 60%, #fff 72%);
}
.command-tabs {
    display: flex;
    height: 22px;
}
.command-tabs button {
    padding: 0 9px;
    border-right: 1px solid #808080;
    border-bottom: 1px solid #808080;
    background-color: #d2d2d2;
    color: #333;
}
.command-tabs .active {
    background-color: #f6f6f6;
    font-weight: bold;
}
.panes {
    display: flex;
    flex: 1;
    min-height: 0;
}
.sidebar {
    position: relative;
    display: flex;
    flex-direction: column;
    width: 238px;
    padding: 2px 2px 0 0;
    border-right: 1px solid #808080;
    background-color: #f6f6f6;
}
.grip {
    display: flex;
    align-items: center;
    justify-content: center;
    height: 16px;
    border-top: 1px solid #b0b0b0;
    border-bottom: 1px solid #b0b0b0;
}
.grip::before,
.splitter::before {
    content: "";
    width: 4px;
    height: 4px;
    border: 1px solid #909090;
    border-radius: 50%;
    background-color: #d0d0d0;
}
.panel-tabs {
    display: flex;
    height: 26px;
    margin-top: 3px;
}
.panel-tabs button {
    width: 40px;
    border: 1px solid #909090;
    border-left: none;
    background-color: #d2d2d2;
}
.panel-tabs .active {
    border-bottom: none;
    background-color: #f6f6f6;
}
.panel-tabs .more {
    flex: 1;
    justify-content: flex-end;
    padding-right: 4px;
    border: none;
    background: none;
}
.panel-tabs svg {
    width: 18px;
    height: 18px;
}
.panel-tabs .more svg {
    width: 8px;
    height: 12px;
}
.filter {
    justify-content: flex-start;
    height: 26px;
    margin: 0 0 1px 3px;
    padding-left: 2px;
    border: 1px solid #c0c0c0;
}
.filter svg {
    width: 18px;
    height: 18px;
}
.filter .caret {
    width: 6px;
    height: 4px;
    margin: 6px 0 0 1px;
}
.tree {
    margin: 0;
    padding: 0;
    list-style: none;
    overflow: hidden;
    border-bottom: 3px solid #3a789c;
}
.tree li {
    display: flex;
    align-items: center;
    height: 22px;
    padding-left: 8px;
    white-space: nowrap;
}
.tree li::before {
    content: "";
    flex: none;
    width: 17px;
}
.tree .closed::before {
    width: 0;
    margin-right: 13px;
    border: 4px solid transparent;
    border-left-color: #555;
    border-right: none;
}
.tree .open::before {
    width: 0;
    margin: 0 11px 0 -2px;
    border: 4px solid transparent;
    border-top-color: #444;
    border-bottom: none;
}
.tree .sub {
    padding-left: 31px;
}
.tree svg {
    width: 18px;
    height: 18px;
    margin-right: 5px;
}
.tree .root {
    padding-left: 3px;
    color: #a8202a;
}
.tree .root::before {
    display: none;
}
.tree .badge {
    width: 15px;
    height: 15px;
    margin: 0 6px 0 2px;
}
.tree .warning {
    color: #8b8232;
}
.hscroll {
    display: flex;
    height: 16px;
    margin-top: auto;
    background-color: #f0f0f0;
}
.hscroll button {
    width: 16px;
}
.hscroll svg {
    width: 8px;
    height: 10px;
}
.track {
    flex: 1;
}
.thumb {
    width: 62%;
    height: 15px;
    background-color: #cdcdcd;
}
.splitter {
    position: absolute;
    top: 402px;
    right: -9px;
    width: 9px;
    height: 39px;
    border: 1px solid #909090;
    border-left: none;
    background-color: #f6f6f6;
}
.viewport {
    position: relative;
    display: flex;
    flex: 1;
    align-items: center;
    justify-content: center;
    min-width: 0;
}
.model {
    width: 738px;
    height: 406px;
}
.triad {
    position: absolute;
    left: 12px;
    bottom: 1px;
    display: flex;
    flex-direction: column;
    font-family: Lato, sans-serif;
    font-size: 13px;
    font-weight: 900;
    line-height: 18px;
}
.triad svg {
    width: 46px;
    height: 50px;
    margin: 0 0 31px 21px;
    font-family: "Liberation Sans", sans-serif;
    font-size: 11px;
    font-weight: normal;
}

/* floating toolbars over the model view */
.view-tools {
    position: absolute;
    top: 4px;
    left: 233px;
    right: 0;
    display: flex;
    justify-content: center;
    width: max-content;
    margin: 0 auto;
}
.view-tools button {
    width: 26px;
    height: 22px;
}
.view-tools svg {
    width: 19px;
    height: 19px;
}
.view-tools .drop {
    width: 14px;
}
.view-tools .drop svg {
    width: 6px;
    height: 4px;
    color: #888;
}
.doc-buttons {
    position: absolute;
    top: 4px;
    right: 6px;
    display: flex;
    color: #999;
}
.doc-buttons button {
    width: 26px;
    height: 22px;
}
.doc-buttons svg {
    width: 14px;
    height: 14px;
}
.task-pane {
    position: absolute;
    top: 50px;
    right: 0;
    width: 26px;
    border: 1px solid #808080;
    border-right: none;
}
.task-pane button {
    width: 100%;
    height: 24px;
    border-bottom: 1px solid #808080;
    background-color: #d6d6d6;
}
.task-pane button:last-child {
    border-bottom: none;
}
.task-pane .active {
    background-color: #fff;
}
.task-pane svg {
    width: 19px;
    height: 19px;
}

/* sheet tabs and status bar */
.sheet-tabs {
    display: flex;
    height: 16px;
    margin-right: 1px;
    border: 1px solid #808080;
    border-left: none;
}
.sheet-tabs > button {
    padding: 0 11px;
    border-right: 1px solid #808080;
    background-color: #d2d2d2;
    color: #333;
    line-height: 14px;
}
.sheet-tabs .active {
    padding: 0 10px 0 13px;
    background-color: #fff;
    color: #000;
    font-weight: bold;
}
.sheet-nav {
    display: flex;
    padding-left: 2px;
    background-color: #707070;
}
.sheet-nav button {
    width: 16px;
    border: 1px solid #888;
    background-color: #b4b4b4;
}
.sheet-nav svg {
    width: 9px;
    height: 9px;
}
.status {
    display: flex;
    align-items: center;
    height: 17px;
    padding: 2px 3px 0 1px;
}
.edition {
    flex: 1;
}
.cell {
    padding: 0 8px 0 4px;
    border-right: 1px solid #c8c8c8;
}
.split {
    margin-left: 7px;
    border-left: 1px solid #c8c8c8;
}
.blank {
    width: 16px;
    height: 15px;
}
.units {
    justify-content: flex-start;
    gap: 18px;
    width: 120px;
    padding-left: 32px;
}
.units svg {
    width: 6px;
    height: 4px;
    transform: rotate(180deg);
}
.tag {
    width: 55px;
    justify-content: flex-end;
}
.tag svg {
    width: 17px;
    height: 14px;
}
```
